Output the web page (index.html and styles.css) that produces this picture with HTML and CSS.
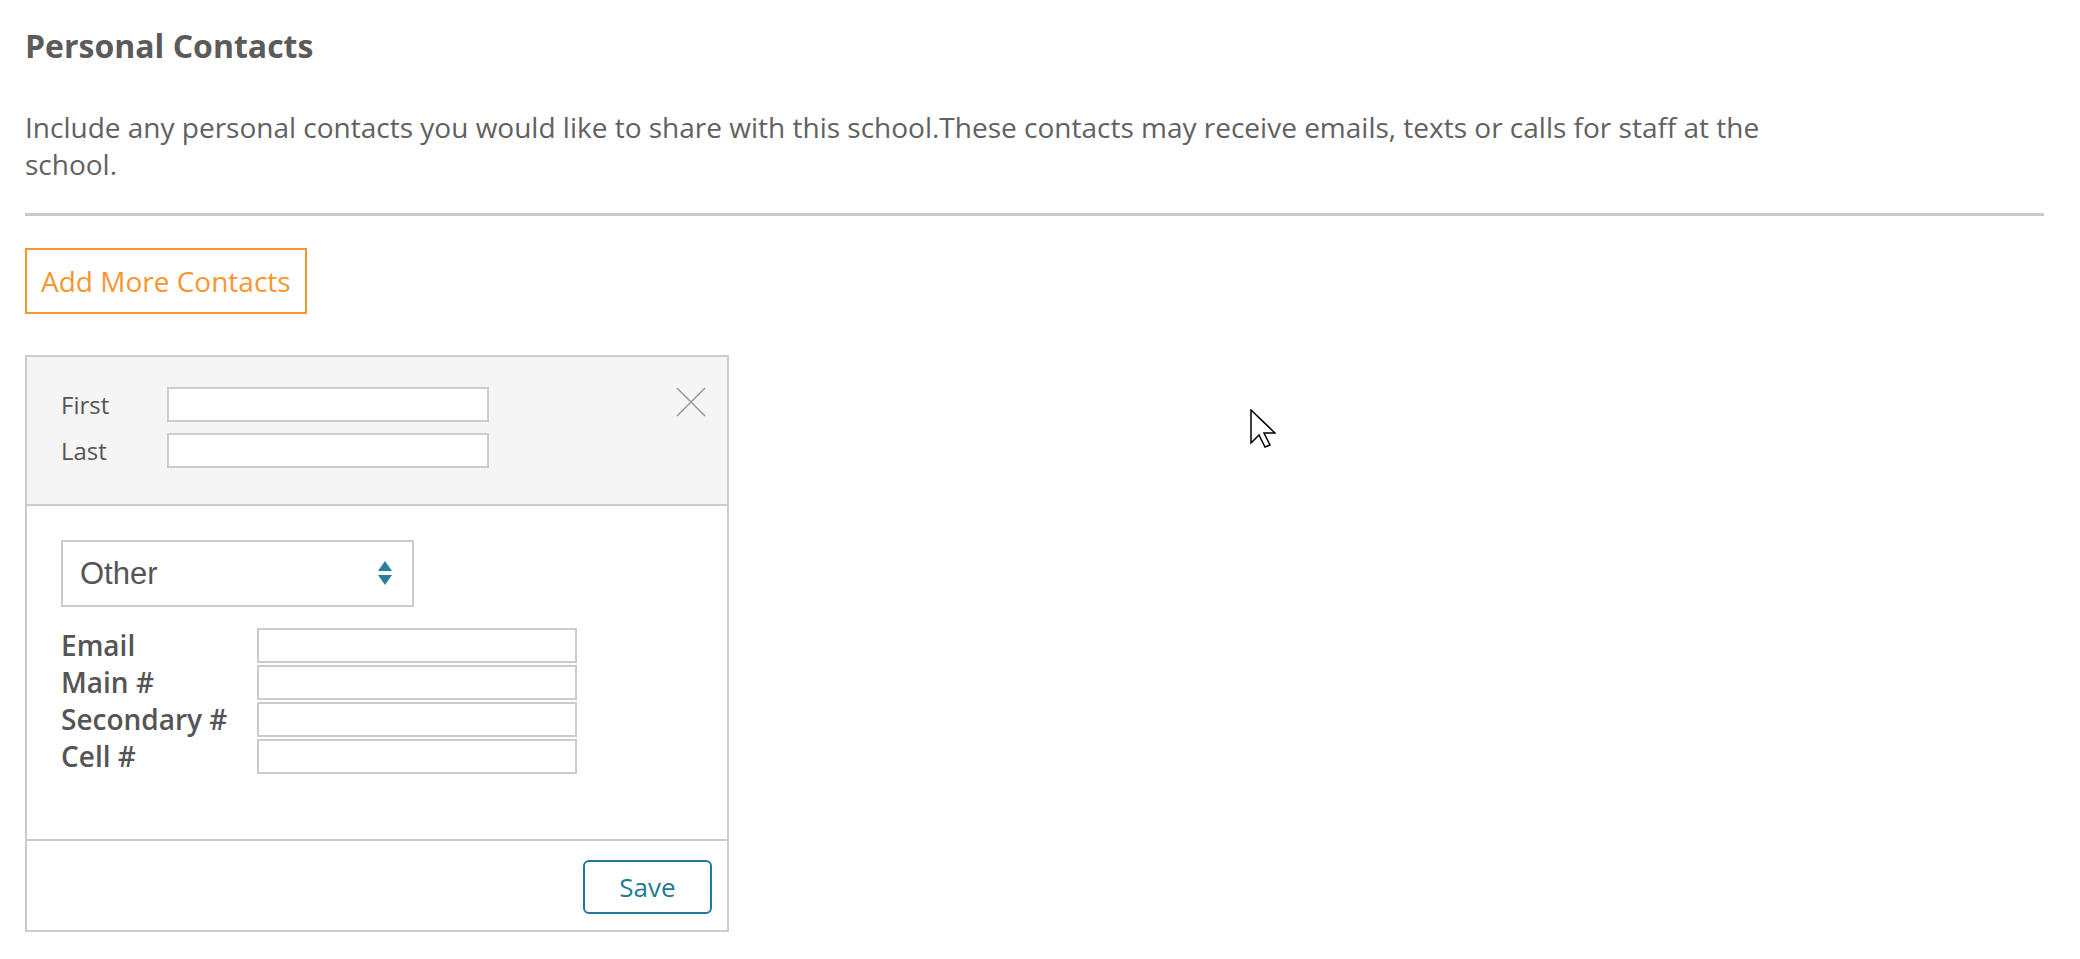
FILE: index.html
```html
<!DOCTYPE html>
<html>
<head>
<title>Personal Contacts</title>
<link rel="stylesheet" href="styles.css">
</head>
<body>
<div class="page">
  <h2 class="title">Personal Contacts</h2>
  <p class="intro">Include any personal contacts you would like to share with this school.These contacts may receive emails, texts or calls for staff at the school.</p>
  <hr class="divider">
  <button class="add-btn">Add More Contacts</button>

  <div class="contact-card">
    <div class="card-head">
      <div class="name-rows">
        <div class="name-row">
          <label>First</label>
          <input type="text" class="name-input">
        </div>
        <div class="name-row">
          <label>Last</label>
          <input type="text" class="name-input">
        </div>
      </div>
      <button class="close-btn">
        <svg width="30" height="30" viewBox="0 0 30 30"><path d="M1 1 L29 29 M29 1 L1 29" stroke="#9a9a9a" stroke-width="1.6" fill="none"/></svg>
      </button>
    </div>

    <div class="card-body">
      <div class="select-wrap">
        <select class="type-select">
          <option>Other</option>
          <option>Spouse</option>
          <option>Parent</option>
        </select>
        <svg class="select-arrows" width="16" height="28" viewBox="0 0 16 28"><path d="M8 1 L15 11 L1 11 Z" fill="#2a7fa0"/><path d="M1 15 L15 15 L8 25 Z" fill="#2a7fa0"/></svg>
      </div>
      <div class="fields">
        <label>Email</label><input type="text" class="field-input">
        <label>Main #</label><input type="text" class="field-input">
        <label>Secondary #</label><input type="text" class="field-input">
        <label>Cell #</label><input type="text" class="field-input">
      </div>
    </div>

    <div class="card-foot">
      <button class="save-btn">Save</button>
    </div>
  </div>

  <svg class="cursor" width="26" height="40" viewBox="0 0 26 40"><path d="M1 1 L1 34 L9 26 L15 38 L20 36 L14 24 L25 24 Z" fill="#fff" stroke="#000" stroke-width="1.5" stroke-linejoin="miter"/></svg>
</div>
</body>
</html>
```

FILE: styles.css
```css
body {
  margin: 0;
  font-family: "Open Sans", "DejaVu Sans", sans-serif;
  color: #5c5c5c;
  background: #fff;
}
.page {
  position: relative;
  padding: 23px 36px 0 25px;
}
.title {
  margin: 0;
  font-size: 32px;
  line-height: 45px;
  font-weight: 700;
  color: #5b5b5b;
}
.intro {
  max-width: 1780px;
  margin: 41px 0 0 0;
  font-size: 28px;
  line-height: 37px;
  color: #616161;
}
.divider {
  margin: 30px 0 0 0;
  border: 0;
  height: 3px;
  background: #cacaca;
}
.add-btn {
  display: block;
  margin-top: 32px;
  height: 66px;
  padding: 0 14px;
  border: 2px solid #f7962f;
  background: #fff;
  color: #f7962f;
  font-family: "Open Sans", sans-serif;
  font-size: 28px;
}
.contact-card {
  width: 704px;
  box-sizing: border-box;
  margin-top: 41px;
  border: 2px solid #cccccc;
}
.card-head {
  display: flex;
  justify-content: space-between;
  align-items: flex-start;
  height: 149px;
  box-sizing: border-box;
  padding: 30px 21px 0 34px;
  background: #f5f5f5;
  border-bottom: 2px solid #cccccc;
}
.name-rows {
  display: flex;
  flex-direction: column;
  gap: 11px;
}
.name-row {
  display: flex;
  align-items: center;
}
.name-row label {
  width: 106px;
  font-size: 24px;
  color: #555;
}
.name-input, .field-input {
  box-sizing: border-box;
  height: 35px;
  border: 2px solid #cccccc;
  background: #fff;
  margin: 0;
  padding: 0 6px;
}
.name-input {
  width: 322px;
}
.close-btn {
  border: 0;
  background: none;
  padding: 0;
  width: 30px;
  height: 30px;
}
.card-body {
  height: 335px;
  box-sizing: border-box;
  padding: 34px 34px 0 34px;
  border-bottom: 2px solid #cccccc;
}
.select-wrap {
  position: relative;
  width: 353px;
}
.type-select {
  appearance: none;
  -webkit-appearance: none;
  width: 353px;
  height: 67px;
  box-sizing: border-box;
  border: 2px solid #cccccc;
  border-radius: 0;
  background: #fff;
  padding: 0 0 0 17px;
  font-family: "Liberation Sans", Arial, sans-serif;
  font-size: 31px;
  color: #555;
}
.select-arrows {
  position: absolute;
  right: 21px;
  top: 20px;
}
.fields {
  display: grid;
  grid-template-columns: 196px 320px;
  row-gap: 2px;
  margin-top: 21px;
}
.fields label {
  font-size: 28px;
  line-height: 35px;
  font-weight: 600;
  color: #555;
}
.card-foot {
  display: flex;
  justify-content: flex-end;
  height: 89px;
  box-sizing: border-box;
  padding: 19px 15px 0 0;
}
.save-btn {
  width: 129px;
  height: 54px;
  border: 2px solid #1f7a99;
  border-radius: 6px;
  background: #fff;
  color: #1f7a99;
  font-family: "Open Sans", sans-serif;
  font-size: 26px;
  padding: 0;
}
.cursor {
  position: absolute;
  left: 1250px;
  top: 409px;
  pointer-events: none;
}
```
